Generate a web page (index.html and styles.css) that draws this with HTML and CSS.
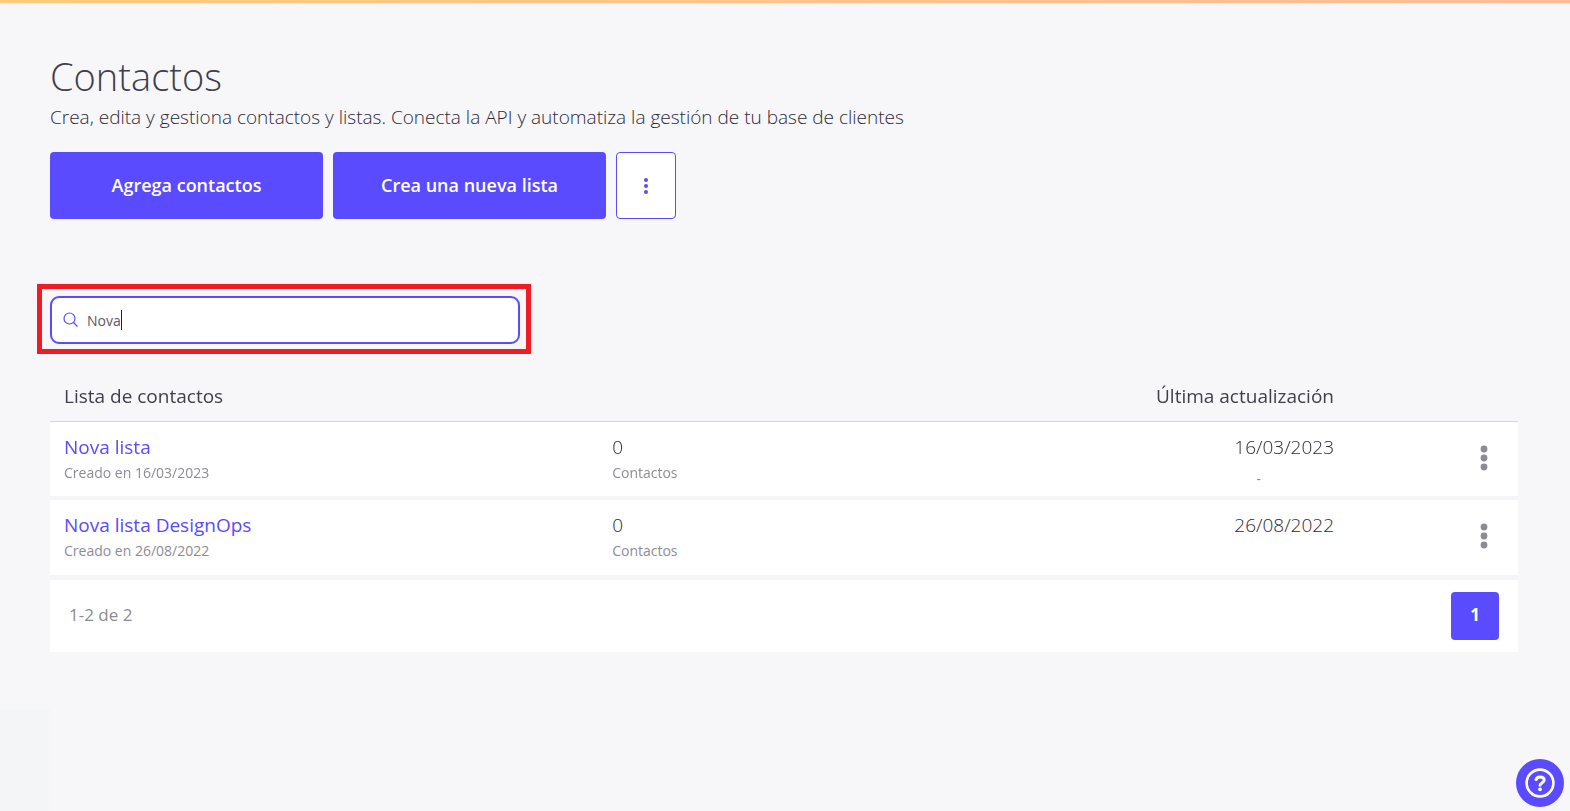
FILE: index.html
```html
<!DOCTYPE html>
<html lang="es">
<head>
  <meta charset="UTF-8" />
  <meta name="viewport" content="width=device-width, initial-scale=1" />
  <title>Contactos</title>
  <link rel="stylesheet" href="styles.css">
</head>
<body>
  <main class="page">
    <h1>Contactos</h1>
    <p class="subtitle">Crea, edita y gestiona contactos y listas. Conecta la API y automatiza la gestión de tu base de clientes</p>

    <div class="actions">
      <button type="button" class="btn">Agrega contactos</button>
      <button type="button" class="btn">Crea una nueva lista</button>
      <button type="button" class="btn-more" aria-label="Más opciones">
        <svg width="6" height="18" viewBox="0 0 6 18"><circle cx="3" cy="3" r="2"/><circle cx="3" cy="9" r="2"/><circle cx="3" cy="15" r="2"/></svg>
      </button>
    </div>

    <div class="highlight">
      <label class="search">
        <svg width="16" height="16" viewBox="0 0 16 16" aria-hidden="true"><circle cx="6.500" cy="6.500" r="5.5"/><path d="M10.500 10.500l4 4"/></svg>
        <input type="text" id="search" value="Nova" aria-label="Buscar lista" autofocus />
        <span class="caret"></span>
      </label>
    </div>

    <table class="lists">
      <thead>
        <tr>
          <th class="col-name">Lista de contactos</th>
          <th class="col-count"></th>
          <th class="col-date">Última actualización</th>
          <th class="col-menu"></th>
        </tr>
      </thead>
      <tbody>
        <tr>
          <td class="col-name"><a href="#">Nova lista</a><small>Creado en 16/03/2023</small></td>
          <td class="col-count">0<small>Contactos</small></td>
          <td class="col-date">16/03/2023<small>-</small></td>
          <td class="col-menu">
            <button type="button" class="dots" aria-label="Opciones de Nova lista">
              <svg width="8" height="26" viewBox="0 0 8 26"><circle cx="4" cy="4" r="3.4"/><circle cx="4" cy="13" r="3.4"/><circle cx="4" cy="22" r="3.4"/></svg>
            </button>
          </td>
        </tr>
        <tr>
          <td class="col-name"><a href="#">Nova lista DesignOps</a><small>Creado en 26/08/2022</small></td>
          <td class="col-count">0<small>Contactos</small></td>
          <td class="col-date">26/08/2022</td>
          <td class="col-menu">
            <button type="button" class="dots" aria-label="Opciones de Nova lista DesignOps">
              <svg width="8" height="26" viewBox="0 0 8 26"><circle cx="4" cy="4" r="3.4"/><circle cx="4" cy="13" r="3.4"/><circle cx="4" cy="22" r="3.4"/></svg>
            </button>
          </td>
        </tr>
      </tbody>
    </table>

    <div class="pager">
      <span>1-2 de 2</span>
      <button type="button" class="page-btn">1</button>
    </div>
  </main>

  <div class="side-strip"></div>

  <button type="button" class="help" aria-label="Ayuda">
    <svg width="30" height="30" viewBox="0 0 30 30" fill="none" stroke="#fff">
      <circle cx="15" cy="15" r="13.4" stroke-width="2.6"/>
      <path d="M11 11.6C11.4 9.8 13 8.9 15 8.9c2.500 0 4.200 1.300 4.200 3.200 0 2.900-4.200 2.700-4.200 5.200" stroke-width="3" stroke-linecap="round"/>
      <circle cx="15" cy="21.300" r="1.900" fill="#fff" stroke="none"/>
    </svg>
  </button>
</body>
</html>
```
FILE: styles.css
```css
* {
  box-sizing: border-box;
}

body {
  margin: 0;
  min-height: 100vh;
  background: #f7f7fa;
  color: #403e4c;
  font-family: "Open Sans", sans-serif;
  font-size: 19px;
}

body::before {
  content: "";
  display: block;
  height: 3px;
  background: linear-gradient(to right, #fdcb7a, #febb96);
}

button, input {
  font-family: inherit;
}

button {
  cursor: pointer;
}

.page {
  padding: 49px 52px 0 50px;
}

h1 {
  margin: 0;
  font-size: 38px;
  line-height: 48px;
  font-weight: 300;
}

.subtitle {
  margin: 0;
  color: #2c2a38;
  line-height: 34px;
  font-weight: 300;
}

.actions {
  display: flex;
  gap: 10px;
  margin-top: 18px;
}

.btn {
  width: 273px;
  height: 67px;
  padding: 0 0 2px;
  border: none;
  border-radius: 4px;
  background: #5a4bff;
  color: #fff;
  font-size: 18px;
  font-weight: 600;
}

.btn-more {
  display: flex;
  align-items: center;
  justify-content: center;
  width: 60px;
  border: 1px solid #5a4bff;
  border-radius: 4px;
  background: #fff;
  fill: #5a4bff;
}

.highlight {
  width: 494px;
  max-width: 100%;
  margin: 65px 0 0 -13px;
  padding: 7px 6px 5px 8px;
  border: 5px solid #ee1c24;
}

.search {
  display: flex;
  align-items: center;
  height: 48px;
  padding: 0 11px;
  border: 2px solid #5a4bff;
  border-radius: 9px;
  background: #fff;
  cursor: text;
}

.search svg {
  margin-right: 8px;
  fill: none;
  stroke: #5a4bff;
  stroke-width: 1.2;
}

/* the field grows with its text, so the caret stays right behind it */
.search input {
  field-sizing: content;
  max-width: 400px;
  padding: 0;
  border: none;
  outline: none;
  background: none;
  color: #5a5866;
  caret-color: transparent;
  font-size: 14px;
}

.caret {
  width: 1px;
  height: 20px;
  background: #222;
}

.lists {
  width: 100%;
  margin-top: 17px;
  table-layout: fixed;
  border-collapse: separate;
  border-spacing: 0;
}

.lists th {
  height: 51px;
  padding: 0 14px;
  border-bottom: 1px solid #d4d4dc;
  font-weight: 400;
  text-align: left;
}

.lists td {
  height: 78px;
  padding: 11px 14px;
  border-bottom: 4px solid #f5f5f8;
  background: #fff;
  color: #2c2a38;
  line-height: 28px;
  font-weight: 300;
  vertical-align: top;
}

.lists tr:last-child td {
  height: 80px;
  border-bottom-width: 5px;
}

.lists a {
  color: #5a4bff;
  font-weight: 400;
  text-decoration: none;
}

.lists small {
  display: block;
  color: #8c8c96;
  font-size: 14px;
  line-height: 24px;
  font-weight: 400;
}

.lists .col-name {
  width: 37%;
}

.lists .col-count {
  padding-left: 19px;
}

.lists .col-date {
  text-align: right;
}

.lists .col-date small {
  padding: 6px 73px 0 0;
}

.lists td.col-date {
  padding-bottom: 0;
}

.lists .col-menu {
  width: 170px;
  padding: 4px 24px 0 0;
  text-align: right;
  vertical-align: middle;
}

.dots {
  display: inline-flex;
  justify-content: center;
  width: 20px;
  padding: 0;
  border: none;
  background: none;
  fill: #8b8b96;
}

.pager {
  display: flex;
  align-items: center;
  justify-content: space-between;
  height: 72px;
  padding: 0 19px;
  background: #fff;
  color: #8c8c96;
  font-size: 17px;
}

.pager span {
  padding-bottom: 3px;
}

.page-btn {
  width: 48px;
  height: 48px;
  padding: 0 0 3px;
  border: none;
  border-radius: 4px;
  background: #5a4bff;
  color: #fff;
  font-size: 17px;
  font-weight: 700;
}

.side-strip {
  position: fixed;
  left: 0;
  bottom: 0;
  width: 50px;
  height: 102px;
  background: #f3f5f7;
}

.help {
  position: fixed;
  right: 6px;
  bottom: 4px;
  display: flex;
  align-items: center;
  justify-content: center;
  width: 48px;
  height: 48px;
  padding: 0;
  border: none;
  border-radius: 50%;
  background: #5a4bff;
}
```
